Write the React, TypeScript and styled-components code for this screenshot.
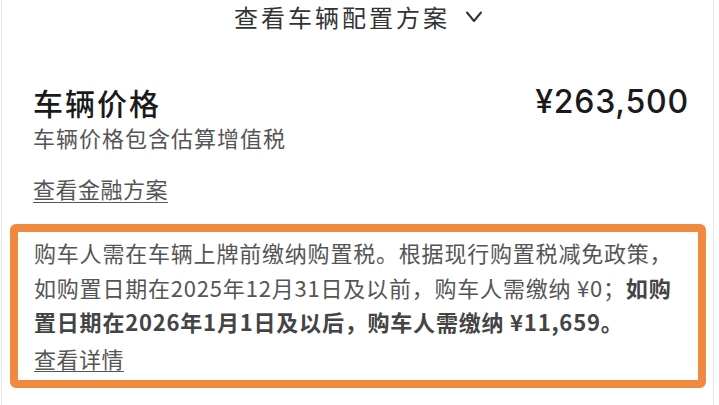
import React from "react";
import styled, { createGlobalStyle } from "styled-components";

const GlobalStyle = createGlobalStyle`
  html, body {
    margin: 0;
    padding: 0;
    background: #ffffff;
  }
  body {
    font-family: "Noto Sans CJK SC", "Noto Sans", sans-serif;
    -webkit-font-smoothing: antialiased;
  }
`;

const ChevronDown: React.FC = () => (
  <svg width="16" height="12" viewBox="0 0 16 12" fill="none">
    <polyline
      points="1,1.5 8,10 15,1.5"
      stroke="#333"
      strokeWidth="2"
      strokeLinecap="round"
      strokeLinejoin="round"
    />
  </svg>
);

const App: React.FC = () => {
  return (
    <>
      <GlobalStyle />
      <Panel>
        <ConfigToggle>
          <ToggleLabel>查看车辆配置方案</ToggleLabel>
          <ChevronDown />
        </ConfigToggle>

        <PriceSection>
          <PriceHeader>
            <PriceTitle>车辆价格</PriceTitle>
            <PriceValue>¥263,500</PriceValue>
          </PriceHeader>
          <PriceNote>车辆价格包含估算增值税</PriceNote>
          <LinkRow>
            <UnderlineLink>查看金融方案</UnderlineLink>
          </LinkRow>
        </PriceSection>

        <TaxNotice>
          <NoticeText>
            购车人需在车辆上牌前缴纳购置税。根据现行购置税减免政策，如购置日期在2025年12月31日及以前，购车人需缴纳 ¥0；
            <Strong>如购置日期在2026年1月1日及以后，购车人需缴纳 ¥11,659。</Strong>
          </NoticeText>
          <DetailLink>查看详情</DetailLink>
        </TaxNotice>
      </Panel>
    </>
  );
};

export default App;

const Panel = styled.div`
  margin-left: 1px;
  width: 713px;
  height: 405px;
  box-sizing: border-box;
  border-left: 1px solid #e6e6e6;
  border-right: 1px solid #e6e6e6;
  padding: 2px 7px 0 8px;
  display: flex;
  flex-direction: column;
`;

const ConfigToggle = styled.div`
  display: flex;
  align-items: center;
  justify-content: center;
  gap: 16px;
  height: 30px;
  color: #333;
  cursor: pointer;
`;

const ToggleLabel = styled.span`
  font-size: 24px;
  line-height: 30px;
  letter-spacing: 3px;
`;

const PriceSection = styled.div`
  margin-top: 49px;
  padding: 0 17px 0 23px;
  display: flex;
  flex-direction: column;
`;

const PriceHeader = styled.div`
  display: flex;
  align-items: center;
  justify-content: space-between;
  height: 41px;
`;

const PriceTitle = styled.h2`
  margin: 0;
  font-size: 30px;
  line-height: 40px;
  font-weight: 500;
  letter-spacing: 2px;
  color: #1a1a1a;
`;

const PriceValue = styled.span`
  font-family: Inter, "Liberation Sans", sans-serif;
  font-size: 32px;
  font-weight: 500;
  letter-spacing: 0.8px;
  color: #1a1a1a;
`;

const PriceNote = styled.p`
  margin: 0;
  font-size: 22px;
  line-height: 30px;
  letter-spacing: 1px;
  color: #555;
`;

const LinkRow = styled.div`
  margin-top: 24px;
`;

const UnderlineLink = styled.span`
  display: inline-block;
  font-size: 22px;
  line-height: 24px;
  letter-spacing: 0.5px;
  padding-bottom: 2px;
  border-bottom: 1.5px solid #555;
  color: #555;
  cursor: pointer;
`;

const TaxNotice = styled.div`
  margin-top: 21px;
  border: 8px solid #f08a3e;
  border-radius: 6px;
  padding: 3px 10px 8px 16px;
  display: flex;
  flex-direction: column;
  align-items: flex-start;
`;

const NoticeText = styled.p`
  margin: 0;
  font-size: 22px;
  line-height: 34.5px;
  letter-spacing: 0.8px;
  color: #555;
`;

const Strong = styled.strong`
  font-weight: 700;
  color: #444;
`;

const DetailLink = styled(UnderlineLink)`
  margin-top: 7px;
  padding-bottom: 1px;
`;
